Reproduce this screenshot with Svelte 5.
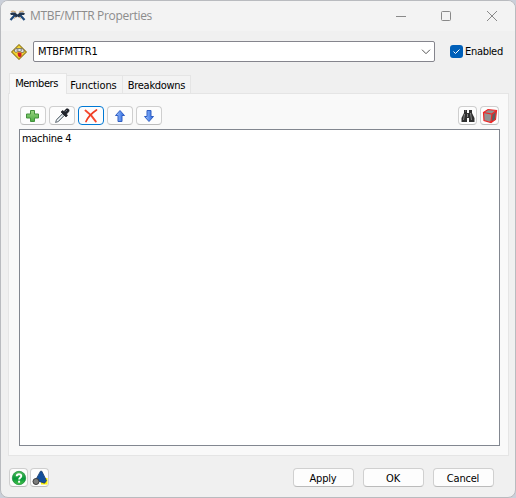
<script>
  const tabs = ['Members', 'Functions', 'Breakdowns'];
  const actions = ['Apply', 'OK', 'Cancel'];
  const tools = ['add', 'pick', 'remove', 'up', 'down'];
  let active = $state('Members');
  let enabled = $state(true);
</script>

{#snippet icon(name)}
  <svg width="16" height="16" viewBox="0 0 16 16" aria-hidden="true">
    {#if name === 'add'}
      <path d="M5.500 2.500h4V6h4v4h-4v3.500h-4V10h-4V6h4z" fill="url(#green)" stroke="#43913c" />
    {:else if name === 'pick'}
      <path d="M1.500 14.500l1-3 6-6 2 2-6 6z" fill="#b5bec4" stroke="#69737a" stroke-width=".9" />
      <path d="M3 13l5.500-5.500" stroke="#f5fafc" />
      <path d="M7 4l1.500-1.500 1.500 1L12 1.200c2-1.400 4 .7 2.700 2.500L12.500 6l1 1.500L12 9z" fill="#20242c" stroke="#101217" stroke-width=".6" />
      <path d="M11.500 3.500l1.500-1.400" stroke="#78818b" />
    {:else if name === 'remove'}
      <path d="M2.500 2.500C6 5 10 9 12.800 13.500" fill="none" stroke="#f5492f" stroke-width="2" stroke-linecap="round" />
      <path d="M13.500 2C9 5 5 9 3 13.500" fill="none" stroke="#ef3d22" stroke-width="1.700" stroke-linecap="round" />
    {:else if name === 'up'}
      <path d="M8 2.500l4.500 5H10v6H6v-6H3.500z" fill="url(#blue)" stroke="#315fc2" />
    {:else if name === 'down'}
      <path d="M8 13.500l4.500-5H10v-6H6v6H3.500z" fill="url(#blue)" stroke="#315fc2" />
    {:else if name === 'find'}
      <path d="M4 2h3v3h2V2h3v3l2.500 5v4H9v-4H7v4H1.500v-4L4 5z" fill="#303030" />
      <path d="M4.500 6L3.500 12M7.500 6v3M10.500 5l1 7M5 3h1" fill="none" stroke="#858585" />
    {:else if name === 'cube'}
      <path d="M1.500 4.500L6 1.500l8.500 1-1 9L9 14.500l-7-2z" fill="#929292" />
      <path d="M10 6.500l4-3-.7 8L9.500 14z" fill="#5f5f5f" />
      <path d="M1.500 4.500L6 1.500l8.500 1-1 9L9 14.500l-7-2zM1.500 4.500l8.500 1.500 4.500-3.500M10 6l-1 8" fill="none" stroke="#f02626" stroke-width="1.200" />
    {:else if name === 'help'}
      <circle cx="8" cy="8" r="6.700" fill="url(#help)" stroke="#16883b" stroke-width=".7" />
      <path d="M5.700 6.200C5.700 3.600 10.300 3.600 10.300 6c0 1.700-2.200 1.700-2.200 3.500" fill="none" stroke="#fff" stroke-width="1.900" />
      <rect x="7.100" y="10.700" width="2" height="2" fill="#fff" />
    {:else if name === 'shapes'}
      <path d="M9 8h6.500v6.500H9z" fill="#fff000" />
      <path d="M8.500 1.200h1.300l4.700 9.500-2 2.500-9-3z" fill="#124f9c" stroke="#173a68" stroke-width=".8" />
      <circle cx="4" cy="11.500" r="3" fill="#7c7c7c" stroke="#3b3b3b" />
    {/if}
  </svg>
{/snippet}

<svg class="defs" width="0" height="0" aria-hidden="true">
  <defs>
    <linearGradient id="green" x2="0" y2="1"><stop stop-color="#9bd582" /><stop offset="1" stop-color="#4cac43" /></linearGradient>
    <linearGradient id="blue"><stop stop-color="#a2c5ff" /><stop offset="1" stop-color="#2464df" /></linearGradient>
    <linearGradient id="help" x2="0" y2="1"><stop stop-color="#52bd59" /><stop offset=".55" stop-color="#07983a" /><stop offset="1" stop-color="#49c549" /></linearGradient>
  </defs>
</svg>

<div class="desktop">
  <main class="window">
    <header>
      <svg class="logo" width="17" height="12" viewBox="0 0 17 12">
        <path d="M2 1.700c2-1 3.500-.7 5 .8M10 2.500c1.500-1.500 3-1.800 5-.8" fill="none" stroke="#c9a679" stroke-width="1.200" />
        <path d="M1 3.500l2-1h3l2.500 2 2.500-2h3l2 1-1 1.500h-2L10 7.500 8.500 6.500 7 7.500 4 5H2z" fill="#23354d" />
        <path d="M5.500 5.500L1.500 10M11.500 5.500l4 4.500" stroke="#214a7b" stroke-width="2.200" />
        <path d="M7 7L5 8.500M10 7l2 1.500" stroke="#c9a679" />
      </svg>
      <span class="title">MTBF/MTTR Properties</span>
      <svg class="controls" width="104" height="12" viewBox="0 0 104 12" fill="none" stroke="#898989">
        <path d="M0 6.500h10" /><rect x="45.500" y="1.500" width="9" height="9" rx="1" /><path d="M91 1l10 10M101 1L91 11" />
      </svg>
    </header>

    <div class="name-row">
      <svg class="sign" width="16" height="16" viewBox="0 0 16 16">
        <path d="M8 .7L15.300 8 8 15.300.7 8z" fill="#f5d52e" stroke="#a08724" stroke-width="1.200" stroke-linejoin="round" />
        <path d="M3.500 7.500V6l1.500-1.500h6L13 6v2l-2 .7L9.500 7.500h-3L5 8.500z" fill="#e2e2e2" stroke="#6c6957" stroke-width=".8" />
        <path d="M5.500 6h2M9.500 6H11" stroke="#555" /><path d="M6.500 8.500h4V12l-1.500 1.500L7 12z" fill="#cf2028" />
      </svg>
      <div class="combo"><span>MTBFMTTR1</span>
        <svg width="10" height="6" viewBox="0 0 10 6"><path d="M1 .7l4 4 4-4" fill="none" stroke="#555" /></svg>
      </div>
      <label>
        <input type="checkbox" bind:checked={enabled} />
        <span class="check">{#if enabled}<svg width="13" height="13" viewBox="0 0 13 13"><path d="M3.500 6.500l2 2 4-4" fill="none" stroke="#fff" /></svg>{/if}</span>
        <span class="enabled">Enabled</span>
      </label>
    </div>

    <div class="tabs">
      {#each tabs as tab}
        <button class="tab {tab.toLowerCase()}" class:active={active === tab} onclick={() => (active = tab)}><span>{tab}</span></button>
      {/each}
    </div>
    <section>
      <div class="toolbar">
        {#each tools as tool}
          <button class="tool" class:focused={tool === 'remove'} aria-label={tool}>{@render icon(tool)}</button>
        {/each}
        <div class="space"></div>
        <button class="tool square" aria-label="find">{@render icon('find')}</button>
        <button class="tool square last" aria-label="view">{@render icon('cube')}</button>
      </div>
      <div class="list"><span>machine 4</span></div>
    </section>

    <footer>
      <button class="tool square" aria-label="help">{@render icon('help')}</button>
      <button class="tool square shapes" aria-label="shapes">{@render icon('shapes')}</button>
      <div class="space"></div>
      {#each actions as action}
        <button class="action {action.toLowerCase()}"><span>{action}</span></button>
      {/each}
    </footer>
  </main>
</div>

<style>
  :global(body) { margin: 0; overflow: hidden; }
  * { box-sizing: border-box; }
  svg { display: block; flex: none; }
  .defs { position: absolute; }
  .desktop { width: 516px; height: 498px; background: #cbd0da; }
  .window { width: 516px; height: 498px; display: flex; flex-direction: column; background: #f0f0f0; border: 1px solid #b9bbbf; border-radius: 8px; overflow: hidden; font: 11px/14px "DejaVu Sans Condensed", "DejaVu Sans", sans-serif; letter-spacing: -.3px; color: #000; }
  button { font: inherit; letter-spacing: inherit; color: inherit; padding: 0; margin: 0; }
  header { height: 30px; display: flex; align-items: center; background: #f3f3f3; padding-left: 8px; flex: none; }
  .title { margin-left: 4px; font: 12px/16px "Open Sans", sans-serif; color: #8c8c8c; letter-spacing: -.32px; white-space: nowrap; }
  .controls { margin-left: auto; margin-right: 15px; }
  .name-row { height: 42px; padding: 10px 0 0 11px; display: flex; align-items: flex-start; flex: none; }
  .sign { margin: 3px 6px 0 -1px; }
  .combo { width: 402px; height: 21px; background: #fff; border: 1px solid #85858d; border-radius: 2px; display: flex; align-items: center; justify-content: space-between; padding: 1px 3px 0 4px; letter-spacing: -.12px; }
  label { display: flex; align-items: center; margin: 3px 0 0 15px; height: 14px; white-space: nowrap; letter-spacing: -.3px; }
  input { display: none; }
  .check { width: 13px; height: 13px; background: #005fb8; border-radius: 3px; margin-right: 2px; }
  .enabled { padding-top: 1px; }
  .tabs { height: 20px; display: flex; align-items: flex-end; margin-left: 8px; flex: none; position: relative; z-index: 1; }
  .tab { height: 18px; border: 1px solid #e5e5e5; border-bottom: 0; border-left: 0; background: #f3f3f3; display: flex; align-items: center; justify-content: center; padding-top: 2px; }
  .tab.active { height: 21px; background: #f9f9f9; border-left: 1px solid #e5e5e5; margin-bottom: -1px; padding: 0 3px 1px 0; letter-spacing: -.45px; }
  .members { width: 58px; }
  .functions { width: 56px; letter-spacing: -.1px; padding-right: 2px; }
  .breakdowns { width: 68px; }
  section { width: 501px; height: 363px; margin-left: 7px; background: #f9f9f9; border: 1px solid #e5e5e5; padding: 12px 8px 9px 10px; flex: none; display: flex; flex-direction: column; }
  .toolbar { display: flex; gap: 3px; height: 20px; padding: 0 1px; margin-bottom: 3px; flex: none; }
  .tool { width: 26px; height: 19px; display: flex; align-items: center; justify-content: center; border: 1px solid #cfcfcf; border-bottom-color: #bcbcbc; background: #fdfdfd; border-radius: 4px; flex: none; }
  .square { width: 19px; }
  .focused { border-color: #0078d4; }
  .space { flex: 1; }
  .list { flex: 1; background: #fff; border: 1px solid #828790; padding: 2px 2px; }
  footer { height: 40px; display: flex; align-items: flex-start; padding: 12px 21px 0 8px; flex: none; }
  .shapes { margin-left: 2px; }
  .action { height: 19px; width: 61px; border: 1px solid #d0d0d0; border-bottom-color: #bbb; border-radius: 4px; background: #fdfdfd; margin-left: 9px; display: flex; align-items: center; justify-content: center; padding: 2px 1px 0 0; letter-spacing: -.2px; }
</style>
